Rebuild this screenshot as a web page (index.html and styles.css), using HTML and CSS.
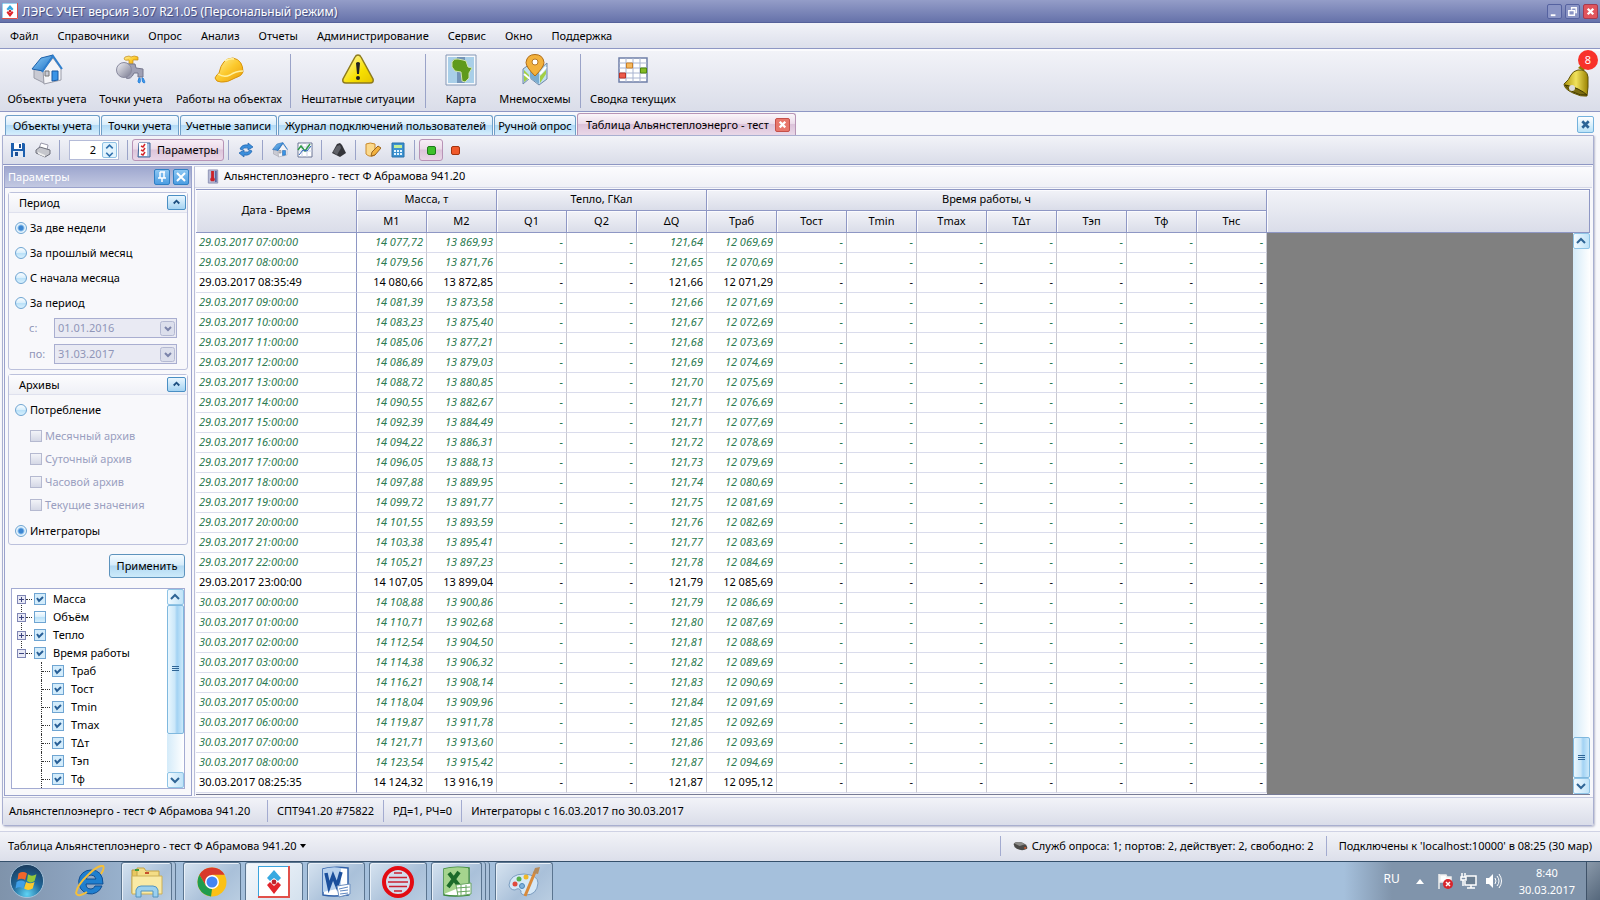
FILE: index.html
```
<!DOCTYPE html>
<html lang="ru">
<head>
	<meta charset="utf-8">
	<meta name="viewport" content="width=device-width">
	<title>ЛЭРС УЧЕТ версия 3.07 R21.05 (Персональный режим)</title>
	<link rel="stylesheet" href="styles.css">
</head>
<body>
	<svg class="defs" width="0" height="0" aria-hidden="true">
		<defs>
			<linearGradient id="gBlue" x1="0" y1="0" x2="1" y2="1"><stop offset="0" stop-color="#8fd0fa"/><stop offset="1" stop-color="#1d6fc4"/></linearGradient>
			<linearGradient id="gYellow" x1="0" y1="0" x2="1" y2="1"><stop offset="0" stop-color="#fff3a0"/><stop offset="0.5" stop-color="#fcc92c"/><stop offset="1" stop-color="#e89a08"/></linearGradient>
			<linearGradient id="gGrey" x1="0" y1="0" x2="1" y2="1"><stop offset="0" stop-color="#f4f4f8"/><stop offset="1" stop-color="#77798f"/></linearGradient>
			<linearGradient id="gWarn" x1="0" y1="0" x2="1" y2="1"><stop offset="0" stop-color="#fff9c0"/><stop offset="0.6" stop-color="#f7e000"/><stop offset="1" stop-color="#e5c400"/></linearGradient>
			<linearGradient id="gGold" x1="0" y1="0" x2="1" y2="0"><stop offset="0" stop-color="#a99108"/><stop offset="0.5" stop-color="#f1e25c"/><stop offset="1" stop-color="#9a8200"/></linearGradient>
			<radialGradient id="gOrb" cx="0.5" cy="0.9" r="0.9"><stop offset="0" stop-color="#5fd4f5"/><stop offset="0.5" stop-color="#1f6698"/><stop offset="1" stop-color="#1a3a5c"/></radialGradient>
			<symbol id="house" viewBox="0 0 32 32">
				<path d="m3 13 10 3v13L3 24z" fill="#c9cad3" stroke="#9a9ca8"/>
				<path d="m12 16 10-12 8 11v11l-17 4z" fill="#f4f4f7" stroke="#9a9ca8"/>
				<path d="M1 15 10 4l12-3-10 16z" fill="url(#gBlue)" stroke="#1c5fa8"/>
				<path d="m11 18 11-16 9 13" fill="none" stroke="#2f7fce" stroke-width="2"/>
				<path d="M14 17h4v5h-4z" fill="#c9ccd6" stroke="#777"/>
				<path d="M21 17h6v9l-6 1z" fill="#3a94e6" stroke="#175aa5"/>
			</symbol>
			<symbol id="lers" viewBox="0 0 16 16">
				<path d="M0 0h16v16H0z" fill="#fff"/>
				<path d="M0 16V0h16" fill="none" stroke="#3aa3dd"/>
				<path d="M15.500 0v15.500H0" fill="none" stroke="#e2504a"/>
				<path d="M8 2 4.500 6 6 7.500l2-1.500 2 1.500L11.500 6z" fill="#36a9e1"/>
				<path d="M8 14 4.500 9.500 6 8l2 2 2-2 1.500 1.500z" fill="#e2252b"/>
				<circle cx="8" cy="8" r="1.200" fill="#c0222a"/>
			</symbol>
		</defs>
	</svg>

	<header class="titlebar">
		<svg class="app-icon"><use href="#lers"/></svg>
		<h1>ЛЭРС УЧЕТ версия 3.07 R21.05 (Персональный режим)</h1>
		<div class="win-buttons">
			<button type="button" class="win-btn" aria-label="Свернуть"><svg viewBox="0 0 14 14"><path d="M3 10h5v2H3z" fill="#fff"/></svg></button>
			<button type="button" class="win-btn" aria-label="Восстановить"><svg viewBox="0 0 14 14"><path d="M3 6h6v5H3zM6 5V3h5v5H10" fill="none" stroke="#fff" stroke-width="1.500"/></svg></button>
			<button type="button" class="win-btn red" aria-label="Закрыть"><svg viewBox="0 0 14 14"><path d="m4 4 6 6m0-6-6 6" stroke="#fff" stroke-width="2.500"/></svg></button>
		</div>
	</header>

	<nav class="menu">
		<a href="#">Файл</a>
		<a href="#">Справочники</a>
		<a href="#">Опрос</a>
		<a href="#">Анализ</a>
		<a href="#">Отчеты</a>
		<a href="#">Администрирование</a>
		<a href="#">Сервис</a>
		<a href="#">Окно</a>
		<a href="#">Поддержка</a>
	</nav>

	<div class="toolbar">
		<button type="button" class="tool w-objects"><svg viewBox="0 0 32 32"><use href="#house"/></svg>Объекты учета</button>
		<button type="button" class="tool w-points">
			<svg viewBox="0 0 32 32">
				<path d="M10 3q5-2 6 0 3-2 7 0v3q-5 0-5 0v5h-4V6q-4 1-5-1z" fill="url(#gYellow)" stroke="#c28a1a" stroke-width=".7"/>
				<path d="M13 10h7l1 4 7 1v8h-5v-4h-4q-3 7-8 5z" fill="#9fa0b4" stroke="#75768c"/>
				<circle cx="9" cy="16" r="7.500" fill="url(#gGrey)" stroke="#8a8ba0"/>
				<path d="M24 24q-2 4 0 5 2 0 1-5zm3 0q0 5 2 5t-1-5z" fill="#3f9cf0" stroke="#2a80d8"/>
			</svg>Точки учета
		</button>
		<button type="button" class="tool w-works">
			<svg viewBox="0 0 32 32">
				<path d="M2 24q2-4 4-5Q9 4 20 4q10 2 10 14-1 4-8 6-8 5-14 4-5 0-6-4z" fill="url(#gYellow)" stroke="#d8940c"/>
				<path d="M5 20q6 4 12 1 6-4 13-4M12 7q5-3 9-2" fill="none" stroke="#fff1a0" stroke-width="1.500"/>
			</svg>Работы на объектах
		</button>
		<span class="sep"></span>
		<button type="button" class="tool w-alerts">
			<svg viewBox="0 0 32 32">
				<path d="M16 1q2 0 3 2l12 22q1 4-3 4H4q-4 0-3-4L13 3q1-2 3-2z" fill="url(#gWarn)" stroke="#8d7a1c" stroke-width="1.500"/>
				<path d="M14 9q2-2 4 0l-1 11h-2z" fill="#222"/><circle cx="16" cy="24" r="2" fill="#222"/>
			</svg>Нештатные ситуации
		</button>
		<span class="sep"></span>
		<button type="button" class="tool w-map">
			<svg viewBox="0 0 32 32">
				<path d="M1 1h30v30H1z" fill="#f6f9fc" stroke="#8497b5"/>
				<path d="M3 3h26v26H3z" fill="#a9cfe8"/><path d="M12 3h8v26h-8z" fill="#7394b8"/>
				<path d="M7 8q2-4 6-3l5 1 3 1 2 6 4 1-3 5v5l-4 4-3-1-1-9-6-1-3-4z" fill="#5f9a1c" stroke="#cfe3b0"/>
			</svg>Карта
		</button>
		<button type="button" class="tool w-mnemo">
			<svg viewBox="0 0 32 32">
				<path d="m4 15 7-5 9 6 8-7v16l-8 6-9-7-7 6z" fill="#bfe0f0" stroke="#7088a8"/>
				<path d="m11 11 9 6v13l-9-6z" fill="#79acd0"/><path d="m5 16 5 5v3l-5 4zm16 13 6-9v-4l-6 6z" fill="#a3cf45"/><path d="m5 20 6 5M21 20l6-7" stroke="#fff" stroke-width="2"/>
				<path d="M16 22Q7 13 7 8.500q1-8 9-8t9 8Q25 13 16 22z" fill="#f2b13c" stroke="#b06d18"/><circle cx="16" cy="8" r="3" fill="#fff" stroke="#b67a28"/>
			</svg>Мнемосхемы
		</button>
		<span class="sep"></span>
		<button type="button" class="tool w-summary">
			<svg viewBox="0 0 32 32">
				<path d="M2 4h28v24H2z" fill="#fff" stroke="#6f7fa8" stroke-width="1.500"/>
				<path d="M2 9h28M2 14h28M2 19h28M2 24h28M9 4v24M16 4v24M23 4v24" stroke="#a9b4d0"/>
				<path d="M9.500 9h6v5h-6z" fill="#f7b95c" stroke="#c9802a"/><path d="M23.500 14h6v5h-6z" fill="#84bb24" stroke="#4f8610"/><path d="M2.500 19h6v5h-6z" fill="#ee5b4c" stroke="#bb3428"/>
			</svg>Сводка текущих
		</button>
		<button type="button" class="bell" aria-label="Уведомления">
			<svg viewBox="0 0 30 36">
				<path d="m16 5 3-3 4 2-1 4z" fill="#8e7a00"/>
				<path d="M16 7q9-1 10 7v10l-1 9q-6 1-14-3-9-4-9-9 5-4 7-9 2-4 7-5z" fill="url(#gGold)" stroke="#5f5208"/>
				<path d="M3 22q7 1 13 4 6 3 9 6-7 1-14-3-6-3-8-7z" fill="#7b6c10" stroke="#3f3600"/><circle cx="10" cy="25" r="3" fill="#dcdcdc"/>
			</svg>
			<span class="badge">8</span>
		</button>
	</div>

	<div class="tabs">
		<button type="button" class="tab t1">Объекты учета</button>
		<button type="button" class="tab t2">Точки учета</button>
		<button type="button" class="tab t3">Учетные записи</button>
		<button type="button" class="tab t4">Журнал подключений пользователей</button>
		<button type="button" class="tab t5">Ручной опрос</button>
		<div class="tab active">
			<span>Таблица Альянстеплоэнерго - тест</span>
			<button type="button" class="tab-close" aria-label="Закрыть вкладку"><svg viewBox="0 0 14 12"><path d="m4 3 6 6m0-6-6 6" stroke="#fff" stroke-width="2.500"/></svg></button>
		</div>
		<button type="button" class="tabs-close" aria-label="Закрыть"><svg viewBox="0 0 14 14"><path d="m4 4 6 6m0-6-6 6" stroke="#2c6496" stroke-width="2.500"/></svg></button>
	</div>

	<main class="page">
		<div class="subbar">
			<button type="button" class="ico" aria-label="Сохранить"><svg viewBox="0 0 16 16"><path d="M1 1h13l1 1v13H1z" fill="#1d5fae"/><path d="M4 1h8v6H4z" fill="#fff"/><path d="M9 2h2v4H9z" fill="#1d4f94"/><path d="M3 9h10v6H3z" fill="#e4ecf8"/><path d="M5 10h3v4H5z" fill="#1d4f94"/></svg></button>
			<button type="button" class="ico" aria-label="Печать"><svg viewBox="0 0 16 16"><path d="m4 6 2-5 7 2-1 5z" fill="#fff" stroke="#99a"/><path d="m1 8 4-3 10 3v4l-5 3-9-4z" fill="#c5c6cc" stroke="#6d6f7a"/><path d="m3 10 7 3v2l-7-3z" fill="#eee"/></svg></button>
			<span class="sep"></span>
			<span class="spin"><input type="text" value="2" aria-label="Точность"><button type="button" aria-label="Изменить"><svg viewBox="0 0 12 14"><path d="m3 5 3-3 3 3M3 9l3 3 3-3" fill="none" stroke="#2f71ae" stroke-width="1.500"/></svg></button></span>
			<span class="sep"></span>
			<button type="button" class="pressed params"><svg viewBox="0 0 16 16"><path d="M3 1h11v14H2z" fill="#a9c4e6" stroke="#3f6698"/><path d="M3 1h8v13H3z" fill="#fff"/><path d="m5 4 2 1 2-3M5 8l2 1 2-3M5 12l2 1 2-3" fill="none" stroke="#d3262c" stroke-width="1.500"/></svg>Параметры</button>
			<span class="sep"></span>
			<button type="button" class="ico" aria-label="Обновить"><svg viewBox="0 0 16 16"><path d="M2 7q2-5 8-4V1l5 4-5 3V6Q6 5 4 8zM14 9q-2 5-8 4v2l-5-4 5-3v2q4 1 6-2z" fill="#3b8edb" stroke="#1c62ad" stroke-width=".7"/></svg></button>
			<span class="sep"></span>
			<button type="button" class="ico" aria-label="Объект"><svg viewBox="0 0 32 32"><use href="#house"/></svg></button>
			<button type="button" class="ico" aria-label="График"><svg viewBox="0 0 16 16"><path d="M1 1h14v14H1z" fill="#fff" stroke="#6b7494"/><path d="M1 5h14M1 9h14M5 1v14M10 1v14" stroke="#cbd3e6"/><path d="m1 8 3-4 4 5 5-7" fill="none" stroke="#2d9a46" stroke-width="1.500"/><path d="m2 13 4-5 4 1 4-5" fill="none" stroke="#2f62b8"/></svg></button>
			<span class="sep"></span>
			<button type="button" class="ico" aria-label="Вес"><svg viewBox="0 0 16 16"><path d="m6 2 3-1 2 2 4 8-6 4-8-4z" fill="#34353a"/><path d="m6 4 3-1 1 3-4 7-4-3z" fill="#5f6168"/></svg></button>
			<span class="sep"></span>
			<button type="button" class="ico" aria-label="Изменить"><svg viewBox="0 0 16 16"><path d="M1 2q4-2 9 0v11q-5 3-9-1z" fill="#fbd98c" stroke="#c98a2c"/><path d="m6 14 1-4 6-6 3 2-6 7z" fill="#f2b23f" stroke="#9a6420"/></svg></button>
			<button type="button" class="ico" aria-label="Калькулятор"><svg viewBox="0 0 16 16"><path d="M2 1h12v14H2z" fill="#3d92cf" stroke="#2670ac"/><path d="M4 3h8v3H4z" fill="#c2ee9a"/><path d="M4 8h2v2H4zm3 0h2v2H7zm3 0h2v2h-2zm-6 3h2v2H4zm3 0h2v2H7zm3 0h2v2h-2z" fill="#e3f4ff"/></svg></button>
			<span class="sep"></span>
			<button type="button" class="pressed square" aria-label="Включено"><i class="led green"></i></button>
			<button type="button" class="ico" aria-label="Выключено"><i class="led"></i></button>
		</div>

		<div class="work">
			<aside class="side">
				<div class="side-title">
					<h2>Параметры</h2>
					<button type="button" aria-label="Закрепить"><svg viewBox="0 0 14 14"><path d="M5 2h5M5 2v6M9 2v6M3 8h8M7 8v4" fill="none" stroke="#fff" stroke-width="1.500"/></svg></button>
					<button type="button" aria-label="Закрыть"><svg viewBox="0 0 14 14"><path d="m3 3 8 8m0-8-8 8" stroke="#fff" stroke-width="2"/></svg></button>
				</div>

				<fieldset class="group">
					<div class="group-title"><span>Период</span><button type="button" aria-label="Свернуть"><svg viewBox="0 0 14 12"><path d="m4 7 3-3 3 3" fill="none" stroke="#1d4f80" stroke-width="2"/></svg></button></div>
					<label><input type="radio" name="period" checked>За две недели</label>
					<label><input type="radio" name="period">За прошлый месяц</label>
					<label><input type="radio" name="period">С начала месяца</label>
					<label><input type="radio" name="period">За период</label>
					<div class="date-row"><label for="from">с:</label><select id="from" disabled><option>01.01.2016</option></select></div>
					<div class="date-row"><label for="to">по:</label><select id="to" disabled><option>31.03.2017</option></select></div>
				</fieldset>

				<fieldset class="group archives">
					<div class="group-title"><span>Архивы</span><button type="button" aria-label="Свернуть"><svg viewBox="0 0 14 12"><path d="m4 7 3-3 3 3" fill="none" stroke="#1d4f80" stroke-width="2"/></svg></button></div>
					<label><input type="radio" name="arch">Потребление</label>
					<div class="sub">
						<label><input type="checkbox" disabled>Месячный архив</label>
						<label><input type="checkbox" disabled>Суточный архив</label>
						<label><input type="checkbox" disabled>Часовой архив</label>
						<label><input type="checkbox" disabled>Текущие значения</label>
					</div>
					<label><input type="radio" name="arch" checked>Интеграторы</label>
				</fieldset>

				<button type="button" class="apply">Применить</button>

				<div class="tree">
					<ul>
						<li><button type="button" class="exp" aria-label="Развернуть"><svg viewBox="0 0 9 9"><path d="M2 4h5v1H2zM4 2h1v5H4z" fill="#3d4580"/></svg></button><label><input type="checkbox" checked>Масса</label></li>
						<li><button type="button" class="exp" aria-label="Развернуть"><svg viewBox="0 0 9 9"><path d="M2 4h5v1H2zM4 2h1v5H4z" fill="#3d4580"/></svg></button><label><input type="checkbox">Объём</label></li>
						<li><button type="button" class="exp" aria-label="Развернуть"><svg viewBox="0 0 9 9"><path d="M2 4h5v1H2zM4 2h1v5H4z" fill="#3d4580"/></svg></button><label><input type="checkbox" checked>Тепло</label></li>
						<li><button type="button" class="exp" aria-label="Свернуть"><svg viewBox="0 0 9 9"><path d="M2 4h5v1H2z" fill="#3d4580"/></svg></button><label><input type="checkbox" checked>Время работы</label></li>
						<li class="child"><label><input type="checkbox" checked>Траб</label></li>
						<li class="child"><label><input type="checkbox" checked>Тост</label></li>
						<li class="child"><label><input type="checkbox" checked>Тmin</label></li>
						<li class="child"><label><input type="checkbox" checked>Тmax</label></li>
						<li class="child"><label><input type="checkbox" checked>ТΔт</label></li>
						<li class="child"><label><input type="checkbox" checked>Тэп</label></li>
						<li class="child"><label><input type="checkbox" checked>Тф</label></li>
					</ul>
					<div class="scroll">
						<button type="button" aria-label="Вверх"><svg viewBox="0 0 14 14"><path d="m3 9 4-4 4 4" fill="none" stroke="#2f6596" stroke-width="2"/></svg></button>
						<div class="thumb tree-thumb"></div>
						<div class="track tree-track"></div>
						<button type="button" aria-label="Вниз"><svg viewBox="0 0 14 14"><path d="m3 5 4 4 4-4" fill="none" stroke="#2f6596" stroke-width="2"/></svg></button>
					</div>
				</div>
			</aside>

			<section class="data">
				<div class="data-title">
					<svg viewBox="0 0 12 16"><path d="M1 1h10v14H1z" fill="#b9bcd6" stroke="#8d91b4"/><path d="M8 2h2v12H8z" fill="#5966a0"/><path d="M4 2h3v7q2 2 0 4H4q-2-2 0-4z" fill="#cc2229"/></svg>
					<h2>Альянстеплоэнерго - тест Ф Абрамова 941.20</h2>
				</div>
				<div class="grid">
					<table>
						<colgroup><col class="c-date"><col span="13" class="c-num"></colgroup>
						<thead>
							<tr><th rowspan="2">Дата - Время</th><th colspan="2">Масса, т</th><th colspan="3">Тепло, ГКал</th><th colspan="8">Время работы, ч</th></tr>
							<tr><th>M1</th><th>M2</th><th>Q1</th><th>Q2</th><th>ΔQ</th><th>Траб</th><th>Тост</th><th>Тmin</th><th>Тmax</th><th>ТΔт</th><th>Тэп</th><th>Тф</th><th>Тнс</th></tr>
						</thead>
						<tbody id="rows"></tbody>
					</table>
					<div class="rest">
						<div class="rest-head"></div>
						<div class="rest-body">
							<div class="scroll">
								<button type="button" aria-label="Вверх"><svg viewBox="0 0 14 14"><path d="m3 9 4-4 4 4" fill="none" stroke="#2f6596" stroke-width="2"/></svg></button>
								<div class="track"></div>
								<div class="thumb grid-thumb"></div>
								<button type="button" aria-label="Вниз"><svg viewBox="0 0 14 14"><path d="m3 5 4 4 4-4" fill="none" stroke="#2f6596" stroke-width="2"/></svg></button>
							</div>
						</div>
					</div>
				</div>
			</section>
		</div>

		<div class="status">
			<span>Альянстеплоэнерго - тест Ф Абрамова 941.20</span>
			<span>СПТ941.20 #75822</span>
			<span>РД=1, РЧ=0</span>
			<span>Интеграторы с 16.03.2017 по 30.03.2017</span>
		</div>
	</main>

	<footer class="appstatus">
		<button type="button">Таблица Альянстеплоэнерго - тест Ф Абрамова 941.20<svg viewBox="0 0 6 4"><path d="M0 0h6L3 4z"/></svg></button>
		<span class="srv"><svg viewBox="0 0 16 10"><path d="M1 2q6-3 12 1 3 2 2 5-5 3-11 0-4-2-3-6z" fill="#4b4a48"/><path d="M1 2q6-3 12 1l-6 2z" fill="#8c8b88"/><path d="M12 6h2v2h-2z" fill="#c5562c"/></svg>Служб опроса: 1; портов: 2, действует: 2, свободно: 2</span>
		<span class="conn">Подключены к 'localhost:10000' в 08:25 (30 мар)</span>
	</footer>

	<div class="taskbar">
		<button type="button" class="start" aria-label="Пуск">
			<svg viewBox="0 0 38 38"><circle cx="19" cy="19" r="17.500" fill="url(#gOrb)" stroke="#a8c4da"/>
				<path d="M10 11q5-3 9 0l-2 7q-4-3-8 0z" fill="#f0662a"/><path d="M20 12q4 3 9 0l-2 7q-4 3-8 0z" fill="#93c83a"/><path d="M8 20q5-3 9 0l-2 7q-4-3-8 0z" fill="#3f9fe8"/><path d="M18 20q4 3 9 0l-2 7q-5 3-9 0z" fill="#fcc92c"/></svg>
		</button>
		<button type="button" class="ie" aria-label="Internet Explorer">
			<svg viewBox="0 0 32 32"><path d="M17 5a12 12 0 1 0 11 16h-7q-1 3-4 3-5 0-5-5h17Q29 5 17 5zm-5 9q1-4 5-4t5 4z" fill="#1f7fcf" stroke="#0f4f93"/><path d="M27 9q4-6 2-8-5-1-14 8Q3 20 2 28q2 5 11-1" fill="none" stroke="#f3bf3a" stroke-width="2"/></svg>
		</button>
		<button type="button" class="task stack" aria-label="Проводник">
			<svg viewBox="0 0 32 32"><path d="M1 4h8l2 3h12v20H1z" fill="#e9c860" stroke="#b8953a"/><path d="M6 2h7l2 3h13v22H6z" fill="#f4dd86" stroke="#c5a447"/><path d="M1 10h30v18H1z" fill="#f9eaa6" stroke="#cdb056"/><path d="M4 3h4v2H4z" fill="#3f9c3a"/><path d="M14 6h4v2h-4z" fill="#c7502c"/><path d="M5 31v-7q1-4 5-4h12q4 0 5 4v7h-5v-6H10v6z" fill="#9bd0ee" stroke="#5294c0"/></svg>
		</button>
		<button type="button" class="task" aria-label="Chrome">
			<svg viewBox="0 0 32 32"><circle cx="16" cy="16" r="14.500" fill="#fbc116"/><path d="M3.400 8.800A14.500 14.500 0 0 1 28.600 8.800H16L9.800 19.600z" fill="#d9392b"/><path d="M3.400 8.800 9.800 19.600 16 23.200l-1 7.200A14.500 14.500 0 0 1 3.400 8.800z" fill="#1f9c4d"/><circle cx="16" cy="16" r="7" fill="#fff"/><circle cx="16" cy="16" r="5.500" fill="#4285f4"/></svg>
		</button>
		<button type="button" class="task current" aria-label="ЛЭРС УЧЕТ"><svg><use href="#lers"/></svg></button>
		<button type="button" class="task" aria-label="Word">
			<svg viewBox="0 0 32 32"><path d="M3 3q10-3 25-1v27q-15 2-25 0z" fill="#fff" stroke="#2e5fa8" stroke-width="1.500"/><path d="M3 3q10-3 18-1v20L3 26z" fill="#b9d2ee"/><path d="m6 7 3 14 4-11 4 10 4-14" fill="none" stroke="#1b4f9c" stroke-width="3.500"/><path d="m17 20 13-2v10l-11 3z" fill="#fff" stroke="#6d8fc0"/><path d="m19 23 9-2m-8 4 8-1m-8 4 8-1" stroke="#5e86c0"/></svg>
		</button>
		<button type="button" class="task" aria-label="Монитор">
			<svg viewBox="0 0 32 32"><circle cx="16" cy="16" r="14" fill="#d3ddec" stroke="#e30b12" stroke-width="4"/><path d="M12 7h8M7 11.500h18M6 16h20M7 20.500h18M12 25h8" stroke="#c92030" stroke-width="1.500"/></svg>
		</button>
		<button type="button" class="task stack many" aria-label="Excel">
			<svg viewBox="0 0 32 32"><path d="M3 3q10-3 25-1v27q-15 2-25 0z" fill="#fff" stroke="#3c8a3a" stroke-width="1.500"/><path d="M3 3q10-3 24-1v16L3 28z" fill="#a5d48e"/><path d="m8 7 11 14M18 6 7 21" stroke="#1c6b2a" stroke-width="4"/><path d="m15 19 15-2v11l-13 2z" fill="#fff" stroke="#68a660"/><path d="m16 22 13-1m-13 5 13-1M20 19v10m5-10v9" stroke="#68a660"/></svg>
		</button>
		<button type="button" class="task" aria-label="Paint">
			<svg viewBox="0 0 32 32"><path d="M1 19Q2 8 16 8q14 1 14 9-1 12-12 12-6 0-5-4-2-4-6-1-5 0-6-5z" fill="#d5e8f7" stroke="#7b9dc0"/><circle cx="7" cy="18" r="2.500" fill="#e04a3c"/><circle cx="11" cy="13" r="2.500" fill="#58b04a"/><circle cx="18" cy="11" r="2.500" fill="#f0b828"/><circle cx="14" cy="20" r="2.500" fill="#7fb2dc" stroke="#4c86b8"/><path d="M27 6 17 30" stroke="#d98a3a" stroke-width="3"/><path d="m25 7 2-5 5-1-2 7z" fill="#b58a5a"/></svg>
		</button>
		<div class="tray">
			<span class="lang">RU</span>
			<svg class="up" viewBox="0 0 8 5"><path d="M0 5h8L4 0z" fill="#fff"/></svg>
			<svg viewBox="0 0 18 18"><path d="M3 2v15M4 3h6l1 2h4v7h-5l-1-2H4z" fill="#fff" stroke="#eee" stroke-width="1.500"/><circle cx="12" cy="12" r="5" fill="#d8262c"/><path d="m10 10 4 4m0-4-4 4" stroke="#fff" stroke-width="1.500"/></svg>
			<svg viewBox="0 0 18 18"><path d="M6 4h10v9H5V9" fill="#6c7f92" stroke="#fff" stroke-width="1.500"/><path d="M7 16h8M11 13v3M2 1v4M5 1v4M1 5h5v3H1zM3 8v6" fill="none" stroke="#fff" stroke-width="1.500"/></svg>
			<svg viewBox="0 0 18 18"><path d="M2 6h3l4-4v14l-4-4H2z" fill="#fff"/><path d="M11 6q2 3 0 6M13 4q4 5 0 10M15 2q5 7 0 14" fill="none" stroke="#fff"/></svg>
			<time class="clock">8:40<br>30.03.2017</time>
			<button type="button" class="desk" aria-label="Свернуть все окна"></button>
		</div>
	</div>

	<script src="script.js"></script>
</body>
</html>
```
FILE: styles.css
```
body{
	font: 11px/14px "Noto Sans", "Open Sans", sans-serif;
	margin: 0;
	min-height: 100vh;
	display: flex;
	flex-direction: column;
	background: #f8f8fb;
	color: #000;
	overflow: hidden;
}

*{
	box-sizing: border-box;
}

button{
	font: inherit;
	color: inherit;
	margin: 0;
	padding: 0;
	border: 0;
	background: none;
}

h1, h2{
	margin: 0;
	font-size: inherit;
	font-weight: normal;
}

svg{
	display: block;
	flex: none;
}

.defs{
	position: absolute;
}

.sep{
	flex: none;
	width: 1px;
	align-self: stretch;
	background: #9aa3c8;
}

/* Title bar */
.titlebar{
	height: 23px;
	display: flex;
	align-items: center;
	padding: 0 2px;
	background: linear-gradient(#949dc8, #6672aa);
	border-bottom: 1px solid #55619a;
	color: #fff;
}

.app-icon{
	width: 16px;
	height: 16px;
	margin-right: 4px;
}

.titlebar h1{
	font-size: 12px;
	line-height: 20px;
	padding-top: 2px;
	text-shadow: 1px 1px 1px #3c477c;
}

.win-buttons{
	margin-left: auto;
	display: flex;
	gap: 3px;
}

.win-btn{
	width: 15px;
	height: 15px;
	border: 1px solid #5562a0;
	border-radius: 2px;
	background: #8a94c4;
}

.win-btn.red{
	background: #e0555c;
	border-color: #a63a50;
}

/* Menu */
.menu{
	height: 26px;
	display: flex;
	align-items: center;
	gap: 19px;
	padding: 0 10px;
	background: linear-gradient(#f2f3f8, #dcdfeb);
	border-bottom: 1px solid #8e97c4;
}

.menu a{
	color: #000;
	text-decoration: none;
}

/* Big toolbar */
.toolbar{
	height: 63px;
	display: flex;
	padding: 3px 0;
	background: linear-gradient(#f2f3f8, #dadde9);
	border-top: 2px solid #fbfbfd;
	border-bottom: 1px solid #8e97c4;
}

.tool{
	display: flex;
	flex-direction: column;
	align-items: center;
	gap: 4px;
	line-height: 18px;
	white-space: nowrap;
}

.tool svg{
	width: 32px;
	height: 32px;
}

.w-objects{ width: 94px; }
.w-points{ width: 74px; }
.w-works{ width: 122px; }
.w-alerts{ width: 134px; }
.w-map{ width: 70px; }
.w-mnemo{ width: 78px; margin-right: 6px; }
.w-summary{ width: 104px; }

.bell{
	position: relative;
	width: 40px;
	margin-left: auto;
}

.bell svg{
	width: 30px;
	height: 36px;
	margin: 0 0 0 2px;
}

.badge{
	position: absolute;
	top: -4px;
	right: 2px;
	width: 20px;
	height: 20px;
	border-radius: 50%;
	background: #f8322a;
	color: #fff;
	line-height: 20px;
	text-align: center;
}

/* Tabs */
.tabs{
	height: 23px;
	display: flex;
	align-items: flex-end;
	gap: 1px;
	padding: 0 6px 0 5px;
	white-space: nowrap;
}

.tab{
	height: 20px;
	border: 1px solid #6f9fc8;
	border-bottom: 0;
	border-radius: 3px 3px 0 0;
	background: linear-gradient(#f7fbff, #d9edfb 45%, #b3daf6 50%, #d5effd);
}

.t1{ width: 95px; }
.t2{ width: 78px; }
.t3{ width: 97px; }
.t4{ width: 215px; }
.t5{ width: 82px; }

.tab.active{
	height: 22px;
	width: 219px;
	display: flex;
	align-items: center;
	justify-content: space-between;
	padding: 0 5px 0 8px;
	border-color: #b795b5;
	background: linear-gradient(#faf6fa, #ecdcea 45%, #dcc3da 50%, #ead8e8);
}

.tab-close{
	width: 15px;
	height: 14px;
	border: 1px solid #c4504a;
	border-radius: 2px;
	background: #e8776c;
}

.tabs-close{
	width: 17px;
	height: 17px;
	margin: 0 0 2px auto;
	border: 1px solid #74b2dd;
	border-radius: 2px;
	background: linear-gradient(#fff, #b9e2f8);
}

/* Page frame */
.page{
	flex: 1;
	display: flex;
	flex-direction: column;
	margin: 0 6px 5px 2px;
	border: 1px solid #a9afd0;
	border-radius: 0 0 3px 3px;
	box-shadow: 1px 1px 2px #b9bccf;
}

.subbar{
	height: 29px;
	display: flex;
	align-items: center;
	padding: 3px 0 3px 2px;
	background: linear-gradient(#f2f3f8, #dadde9);
	border-bottom: 1px solid #8e97c4;
}

.subbar .sep{
	margin: 1px 4px;
}

.ico{
	width: 25px;
	height: 20px;
	display: flex;
	align-items: center;
	justify-content: center;
}

.ico svg, .params svg{
	width: 16px;
	height: 16px;
}

.spin{
	width: 50px;
	height: 20px;
	margin: 0 4px 0 5px;
	display: flex;
	border: 1px solid #b4bbd8;
	background: #fff;
}

.spin input{
	flex: 1;
	min-width: 0;
	border: 0;
	padding: 0 5px 0 0;
	font: inherit;
	text-align: right;
	background: none;
}

.spin button{
	width: 15px;
	margin: 1px;
	border: 1px solid #8fc1e4;
	border-radius: 2px;
	background: #e2f3fd;
}

.pressed{
	height: 22px;
	border: 1px solid #b893b6;
	border-radius: 3px;
	background: linear-gradient(#f7eef6, #ecdcea 45%, #dcc4da 50%, #e9d6e7);
}

.params{
	width: 92px;
	display: flex;
	align-items: center;
	gap: 5px;
	padding: 0 3px;
}

.square{
	width: 24px;
	display: flex;
	align-items: center;
	justify-content: center;
}

.led{
	width: 9px;
	height: 9px;
	border: 1px solid #a23410;
	border-radius: 2px;
	background: #f05a2c;
}

.led.green{
	border-color: #1f7a1a;
	background: #3fc02c;
}

.work{
	flex: 1;
	display: flex;
	gap: 2px;
	padding: 1px;
}

/* Parameters panel */
.side{
	width: 188px;
	flex: none;
	display: flex;
	flex-direction: column;
	border: 1px solid #9aa2cc;
	padding-bottom: 6px;
	background: #f8f8fb;
}

.side-title{
	height: 21px;
	display: flex;
	align-items: center;
	gap: 3px;
	padding: 0 2px 0 3px;
	background: linear-gradient(#9ea7cf, #c3c9e2);
	color: #fff;
	border-bottom: 1px solid #9aa2cc;
}

.side-title h2{
	flex: 1;
}

.side-title button{
	width: 16px;
	height: 16px;
	border: 1px solid #2f7fc4;
	border-radius: 2px;
	background: linear-gradient(#8cc6f2, #4d9ee2);
}

.group{
	margin: 4px 3px 0;
	padding: 0 0 2px;
	border: 1px solid #bcc1dc;
	border-radius: 3px;
	min-width: 0;
}

.group-title{
	height: 20px;
	display: flex;
	align-items: center;
	justify-content: space-between;
	padding: 0 1px 0 10px;
	margin-bottom: 2px;
	border-bottom: 1px solid #dfe1ee;
	background: linear-gradient(#fcfcfe, #eff0f6);
}

.group-title button{
	width: 19px;
	height: 15px;
	padding: 0 2px;
	border: 1px solid #4a8fc4;
	border-radius: 2px;
	background: linear-gradient(#e9f6fe, #a4d3f2);
}

.group label{
	display: flex;
	align-items: center;
	height: 25px;
	padding-left: 6px;
}

input[type=radio], input[type=checkbox]{
	appearance: none;
	flex: none;
	width: 12px;
	height: 12px;
	margin: 0 3px 0 0;
	border: 1px solid #6fa5d2;
	background: linear-gradient(#fafdff, #d7eefc 50%, #b8e0f8 50%, #d8f0fd);
}

input[type=radio]{
	border-radius: 50%;
}

input[type=radio]:checked{
	background: radial-gradient(#3c86d2 0 2px, #8dc0ec 3px, #e8f5fd 4px);
}

input[type=checkbox]:checked{
	background: #d3ecfb url("data:image/svg+xml,%3Csvg xmlns='http://www.w3.org/2000/svg' viewBox='0 0 10 10'%3E%3Cpath d='m2 4 2 3 4-4' fill='none' stroke='%23285f96' stroke-width='2'/%3E%3C/svg%3E");
}

input[type=checkbox]:disabled{
	border-color: #b5b9d0;
	background: linear-gradient(#f2f3f8, #d5d8e6);
}

.group .date-row{
	display: flex;
	height: 26px;
	align-items: center;
	color: #9096b8;
}

.date-row label{
	width: 45px;
	padding-left: 20px;
}

.date-row select{
	appearance: none;
	width: 123px;
	height: 20px;
	padding: 0 3px;
	border: 1px solid #a9aed0;
	border-radius: 0;
	font: inherit;
	color: #9096b8;
	opacity: 1;
	background: #e9eaf3 url("data:image/svg+xml,%3Csvg xmlns='http://www.w3.org/2000/svg' viewBox='0 0 15 15'%3E%3Crect x='.5' y='.5' width='14' height='14' rx='2' fill='%23dcdfec' stroke='%23b4b9d2'/%3E%3Cpath d='m5 6 3 3 3-3' fill='none' stroke='%237b84aa' stroke-width='2'/%3E%3C/svg%3E") no-repeat right 1px center / 15px 15px;
}

.archives{
	padding-bottom: 1px;
}

.sub label{
	height: 23px;
	padding-left: 21px;
	color: #9a9fc0;
}

.sub{
	padding: 2px 0;
}

.apply{
	align-self: flex-end;
	width: 76px;
	height: 24px;
	margin: 9px 6px 10px 0;
	border: 1px solid #5d93bd;
	border-radius: 3px;
	background: linear-gradient(#f4fbff, #d5ecfa 45%, #b2d9f2 50%, #cdeafa);
}

.tree{
	flex: 1;
	display: flex;
	margin: 0 6px;
	border: 1px solid #a3abd2;
	background: #fff;
}

.tree ul{
	flex: 1;
	margin: 0;
	padding: 1px 0 0 5px;
	list-style: none;
	background: repeating-linear-gradient(#333 0 1px, transparent 1px 2px) 9px 10px / 1px 54px no-repeat;
}

.tree li{
	height: 18px;
	display: flex;
	align-items: center;
}

.tree label{
	display: flex;
	align-items: center;
}

.tree label::before{
	content: "";
	width: 6px;
	margin: 0 2px 0 0;
	border-top: 1px dotted #333;
}

.tree input[type=checkbox]{
	margin-right: 7px;
}

.tree li.child{
	margin-left: 24px;
	border-left: 1px dotted #333;
}

.tree .child label::before{
	width: 8px;
}

.exp{
	width: 9px;
	height: 9px;
	background: #e8e9f5;
	box-shadow: inset 0 0 0 1px #7f86b4;
}

.exp svg{
	width: 9px;
	height: 9px;
}

/* Scrollbars */
.scroll{
	width: 17px;
	display: flex;
	flex-direction: column;
	background: #eef7fd;
}

.scroll button{
	height: 16px;
	border: 1px solid #8fc4e6;
	border-radius: 2px;
	background: linear-gradient(90deg, #f2faff, #c0e3f8);
}

.scroll button svg{
	height: 14px;
}

.track{
	flex: 1;
	background: linear-gradient(90deg, #d4ebf9, #fff);
}

.thumb{
	display: flex;
	border: 1px solid #7fb8de;
	border-radius: 2px;
	background: linear-gradient(90deg, #e8f6fe, #cbe7f9 45%, #a2d2f3 60%, #cdeafb);
}

.thumb::before{
	content: "";
	width: 7px;
	height: 6px;
	margin: auto;
	background: repeating-linear-gradient(#2f6596 0 1px, transparent 1px 2px);
}

.tree-thumb{ flex: 138; }
.tree-track{ flex: 42; }

.grid-thumb{
	height: 41px;
}

/* Data table */
.data{
	flex: 1;
	display: flex;
	flex-direction: column;
	padding-bottom: 1px;
	border-left: 1px solid #b8bdd9;
	border-top: 1px solid #d4d7e7;
}

.data-title{
	height: 21px;
	display: flex;
	align-items: center;
	gap: 5px;
	padding: 0 0 2px 12px;
	margin-bottom: 1px;
	background: linear-gradient(#fcfcfe, #eff0f6);
	border-bottom: 1px solid #d4d7e7;
}

.data-title svg{
	width: 12px;
	height: 15px;
}

.grid{
	flex: 1;
	display: flex;
	margin: 0 2px 0 1px;
	border-top: 1px solid #8e97c4;
	border-bottom: 1px solid #777b94;
}

table{
	flex: none;
	align-self: flex-start;
	width: 1071px;
	table-layout: fixed;
	border-collapse: separate;
	border-spacing: 0;
	background: #fff;
}

.c-date{ width: 161px; }
.c-num{ width: 70px; }

th{
	height: 22px;
	padding: 0 0 2px;
	font-weight: normal;
	border-right: 1px solid #8e97c4;
	border-bottom: 1px solid #8e97c4;
	background: linear-gradient(#f2f3f8, #dadde9);
	box-shadow: inset 1px 1px 0 #fbfbfe;
}

thead tr:first-child th{
	height: 21px;
}

td{
	height: 20px;
	padding: 0 3px 2px;
	text-align: right;
	white-space: nowrap;
	border-right: 1px solid #c9c9d2;
	border-bottom: 1px solid #dadcec;
	color: #2b7a50;
	font-style: italic;
}

td:first-child{
	text-align: left;
	border-right-color: #8e97c4;
}

.fact td{
	color: #000;
	font-style: normal;
}

.rest{
	flex: 1;
	display: flex;
	flex-direction: column;
}

.rest-head{
	height: 43px;
	border-bottom: 1px solid #8e97c4;
	border-right: 1px solid #8e97c4;
	background: linear-gradient(#f2f3f8, #dadde9);
	box-shadow: inset 1px 1px 0 #fbfbfe;
}

.rest-body{
	flex: 1;
	display: flex;
	justify-content: flex-end;
	background: #808080;
}

/* Status bars */
.status{
	height: 28px;
	display: flex;
	align-items: center;
	padding-bottom: 2px;
	background: linear-gradient(#f2f3f8, #dadde9);
	border-top: 1px solid #c5c9df;
}

.status span{
	padding: 4px 9px;
	border-right: 1px solid #a3abd0;
}

.status span:first-child{
	min-width: 265px;
	padding-left: 6px;
}

.status span:last-child{
	border: 0;
}

.appstatus{
	height: 30px;
	display: flex;
	align-items: center;
	padding: 0 8px 2px;
	background: linear-gradient(#f2f3f8, #dcdfea);
	border-top: 1px solid #cfd2e4;
}

.appstatus button{
	display: flex;
	align-items: center;
	gap: 3px;
}

.appstatus button svg{
	width: 6px;
	height: 4px;
}

.srv{
	display: flex;
	align-items: center;
	gap: 4px;
	margin-left: auto;
	padding: 3px 12px;
	border-left: 1px solid #a3abd0;
}

.srv svg{
	width: 15px;
	height: 10px;
}

.conn{
	padding: 3px 0 3px 12px;
	border-left: 1px solid #a3abd0;
}

/* Taskbar */
.taskbar{
	height: 39px;
	display: flex;
	align-items: stretch;
	border-top: 1px solid #35506b;
	background: linear-gradient(90deg, #7f93ab, #8aa0bb 60px, #a5c0dc 180px, #a5c0dc 84%, #8094ab 87%);
}

.start{
	width: 54px;
}

.start svg{
	width: 36px;
	height: 36px;
	margin: auto;
}

.ie{
	width: 63px;
	padding-left: 20px;
}

.ie svg, .task svg{
	width: 32px;
	height: 32px;
}

.task{
	width: 58px;
	margin-left: 4px;
	padding: 0 12px;
	border: 1px solid #5b7590;
	border-bottom: 0;
	border-radius: 3px 3px 0 0;
	background: linear-gradient(135deg, #d6e3f0, #a9c0d9 60%, #b9cde1);
	box-shadow: inset 1px 1px 0 #e8f0f8;
}

.task.current{
	background: linear-gradient(135deg, #f4f8fc, #d4e1ee);
}

.task.stack{
	width: 51px;
	padding: 0 9px;
	margin-right: 7px;
	box-shadow: inset 1px 1px 0 #e8f0f8, 3px 0 0 #a9c0d9, 4px 0 0 #5b7590;
}

.task.many{
	margin-right: 9px;
	box-shadow: inset 1px 1px 0 #e8f0f8, 3px 0 0 #a9c0d9, 4px 0 0 #5b7590, 7px 0 0 #a9c0d9, 8px 0 0 #5b7590;
}

.tray{
	margin-left: auto;
	display: flex;
	align-items: center;
	color: #fff;
}

.tray svg{
	width: 18px;
	height: 18px;
	margin-right: 6px;
}

.lang{
	margin: 0 16px 4px 0;
	font-size: 12px;
}

.tray .up{
	width: 8px;
	height: 5px;
	margin-right: 12px;
}

.clock{
	margin: 0 11px;
	text-align: center;
	line-height: 17px;
}

.desk{
	width: 14px;
	align-self: stretch;
	border-left: 1px solid #3f5268;
	background: linear-gradient(135deg, #8a99aa, #56687c);
}
```
FILE: script.js
```
// date, M1, M2, dQ, run hours; a trailing 1 marks a stored (not interpolated) record
var data = [
	["29.03.2017 07:00:00", "14 077,72", "13 869,93", "121,64", "12 069,69"],
	["29.03.2017 08:00:00", "14 079,56", "13 871,76", "121,65", "12 070,69"],
	["29.03.2017 08:35:49", "14 080,66", "13 872,85", "121,66", "12 071,29", 1],
	["29.03.2017 09:00:00", "14 081,39", "13 873,58", "121,66", "12 071,69"],
	["29.03.2017 10:00:00", "14 083,23", "13 875,40", "121,67", "12 072,69"],
	["29.03.2017 11:00:00", "14 085,06", "13 877,21", "121,68", "12 073,69"],
	["29.03.2017 12:00:00", "14 086,89", "13 879,03", "121,69", "12 074,69"],
	["29.03.2017 13:00:00", "14 088,72", "13 880,85", "121,70", "12 075,69"],
	["29.03.2017 14:00:00", "14 090,55", "13 882,67", "121,71", "12 076,69"],
	["29.03.2017 15:00:00", "14 092,39", "13 884,49", "121,71", "12 077,69"],
	["29.03.2017 16:00:00", "14 094,22", "13 886,31", "121,72", "12 078,69"],
	["29.03.2017 17:00:00", "14 096,05", "13 888,13", "121,73", "12 079,69"],
	["29.03.2017 18:00:00", "14 097,88", "13 889,95", "121,74", "12 080,69"],
	["29.03.2017 19:00:00", "14 099,72", "13 891,77", "121,75", "12 081,69"],
	["29.03.2017 20:00:00", "14 101,55", "13 893,59", "121,76", "12 082,69"],
	["29.03.2017 21:00:00", "14 103,38", "13 895,41", "121,77", "12 083,69"],
	["29.03.2017 22:00:00", "14 105,21", "13 897,23", "121,78", "12 084,69"],
	["29.03.2017 23:00:00", "14 107,05", "13 899,04", "121,79", "12 085,69", 1],
	["30.03.2017 00:00:00", "14 108,88", "13 900,86", "121,79", "12 086,69"],
	["30.03.2017 01:00:00", "14 110,71", "13 902,68", "121,80", "12 087,69"],
	["30.03.2017 02:00:00", "14 112,54", "13 904,50", "121,81", "12 088,69"],
	["30.03.2017 03:00:00", "14 114,38", "13 906,32", "121,82", "12 089,69"],
	["30.03.2017 04:00:00", "14 116,21", "13 908,14", "121,83", "12 090,69"],
	["30.03.2017 05:00:00", "14 118,04", "13 909,96", "121,84", "12 091,69"],
	["30.03.2017 06:00:00", "14 119,87", "13 911,78", "121,85", "12 092,69"],
	["30.03.2017 07:00:00", "14 121,71", "13 913,60", "121,86", "12 093,69"],
	["30.03.2017 08:00:00", "14 123,54", "13 915,42", "121,87", "12 094,69"],
	["30.03.2017 08:25:35", "14 124,32", "13 916,19", "121,87", "12 095,12", 1]
];

var rows = document.getElementById("rows");
data.forEach(function(r) {
	var cells = [r[0], r[1], r[2], "-", "-", r[3], r[4], "-", "-", "-", "-", "-", "-", "-"];
	var tr = rows.insertRow();
	if (r[5]) tr.className = "fact";
	cells.forEach(function(c) {
		tr.insertCell().textContent = c;
	});
});
```
